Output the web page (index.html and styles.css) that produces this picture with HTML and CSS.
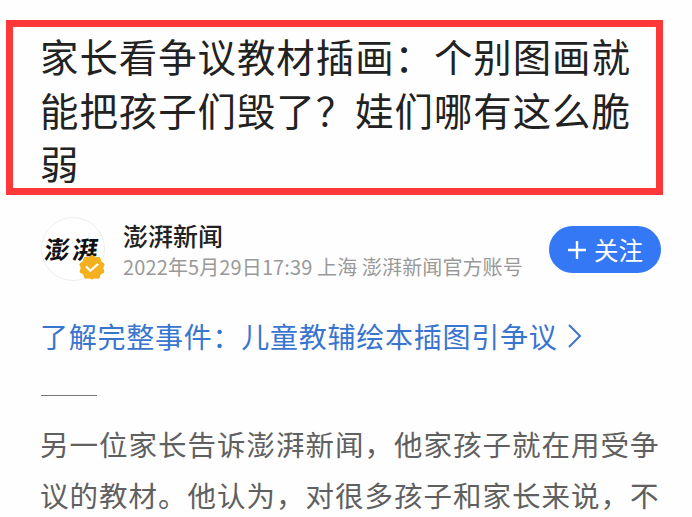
FILE: index.html
```html
<!DOCTYPE html>
<html lang="zh-CN">
<head>
<meta charset="UTF-8">
    <title>澎湃新闻</title>
    <link rel="stylesheet" href="styles.css">
</head>
<body>
    <div class="article">
        <div class="titleBox">
            <h1>家长看争议教材插画：个别图画就<br>能把孩子们毁了？娃们哪有这么脆<br>弱</h1>
        </div>

        <div class="author">
            <div class="avatar">
                <span class="avatar-txt">澎湃</span>
                <svg class="avatar-v" width="26" height="26" viewBox="0 0 26 26">
                    <path d="M13 1l3.4 2.6 4.2-.2 1.2 4.1 3.4 2.6-1.4 4 1.2 4-3.6 2.2-1.6 3.9-4.2-.2L13 25l-2.6-1-4.2.2-1.6-3.9L1 18.1l1.2-4-1.4-4 3.4-2.6 1.2-4.1 4.2.2z" fill="#f5b01d" stroke="#f5b01d" stroke-linejoin="round"/>
                    <path d="M7 12.5l4.4 4.2 7.8-6.9" fill="none" stroke="#fff" stroke-width="2.2"/>
                </svg>
            </div>
            <div class="author-info">
                <div class="author-name">澎湃新闻</div>
                <div class="author-meta">2022年5月29日17:39 上海 澎湃新闻官方账号</div>
            </div>
            <div class="follow">
                <svg width="20" height="20" viewBox="0 0 20 20"><path d="M10 1v18M1 10h18" stroke="#fff" stroke-width="2.4"/></svg>
                <span>关注</span>
            </div>
        </div>

        <div class="event">
            <span>了解完整事件：儿童教辅绘本插图引争议</span>
            <svg width="16" height="26" viewBox="0 0 16 26"><path d="M2 2l11 11L2 24" fill="none" stroke="#3975cf" stroke-width="2"/></svg>
        </div>

        <div class="line"></div>

        <p class="content">另一位家长告诉澎湃新闻，他家孩子就在用受争<br>议的教材。他认为，对很多孩子和家长来说，不</p>
    </div>
</body>
</html>
```

FILE: styles.css
```css
body, div, h1, p {padding: 0; margin: 0;}

body {
    background: #fefefe;
    font-family: "Noto Sans CJK SC", sans-serif;
    overflow: hidden;
}

.article {
    width: 692px;
    height: 517px;
    padding-top: 20px;
    box-sizing: border-box;
    overflow: hidden;
    white-space: nowrap;
}

/* 标题 */
.titleBox {
    width: 657px;
    height: 175px;
    margin-left: 6px;
    padding: 2px 0 0 27px;
    border: 7px solid #fe3838;
    box-sizing: border-box;
}

.titleBox h1 {
    color: #222;
    font-size: 38.4px;
    font-weight: normal;
    letter-spacing: 1px;
    line-height: 53.5px;
}

/* 作者 */
.author {
    display: flex;
    height: 66px;
    margin: 22px 31px 0 41px;
}

.avatar {
    position: relative;
    width: 64px;
    height: 64px;
    border: 1px solid #eee;
    border-radius: 50%;
    box-sizing: border-box;
    background: #fff;
}

.avatar-txt {
    display: block;
    margin: 15px 0 0 3px;
    color: #111;
    font-size: 25px;
    font-weight: bold;
    letter-spacing: 3px;
    line-height: 30px;
    transform: skewX(-8deg);
}

.avatar-v {
    position: absolute;
    left: 37px;
    top: 36px;
}

.author-info {
    flex: 1;
    padding-left: 18px;
}

.author-name {
    height: 36px;
    color: #222;
    font-size: 25px;
    font-weight: 500;
    line-height: 37px;
}

.author-meta {
    color: #999;
    font-size: 20px;
    letter-spacing: .12px;
    line-height: 27px;
}

.follow {
    display: flex;
    align-items: center;
    justify-content: center;
    gap: 7px;
    width: 112px;
    height: 47px;
    margin-top: 9px;
    border-radius: 24px;
    background: #3478f6;
    color: #fff;
    font-size: 24.5px;
    line-height: 45px;
}

/* 事件入口 */
.event {
    display: flex;
    align-items: center;
    gap: 9px;
    height: 40px;
    margin: 33px 0 0 40px;
    color: #3975cf;
    font-size: 28px;
    letter-spacing: .75px;
}

.line {
    width: 56px;
    height: 1px;
    margin: 39px 0 0 41px;
    background: #777;
}

.content {
    margin: 22px 0 0 40px;
    color: #606060;
    font-size: 28.5px;
    letter-spacing: 1px;
    line-height: 51px;
}
```
